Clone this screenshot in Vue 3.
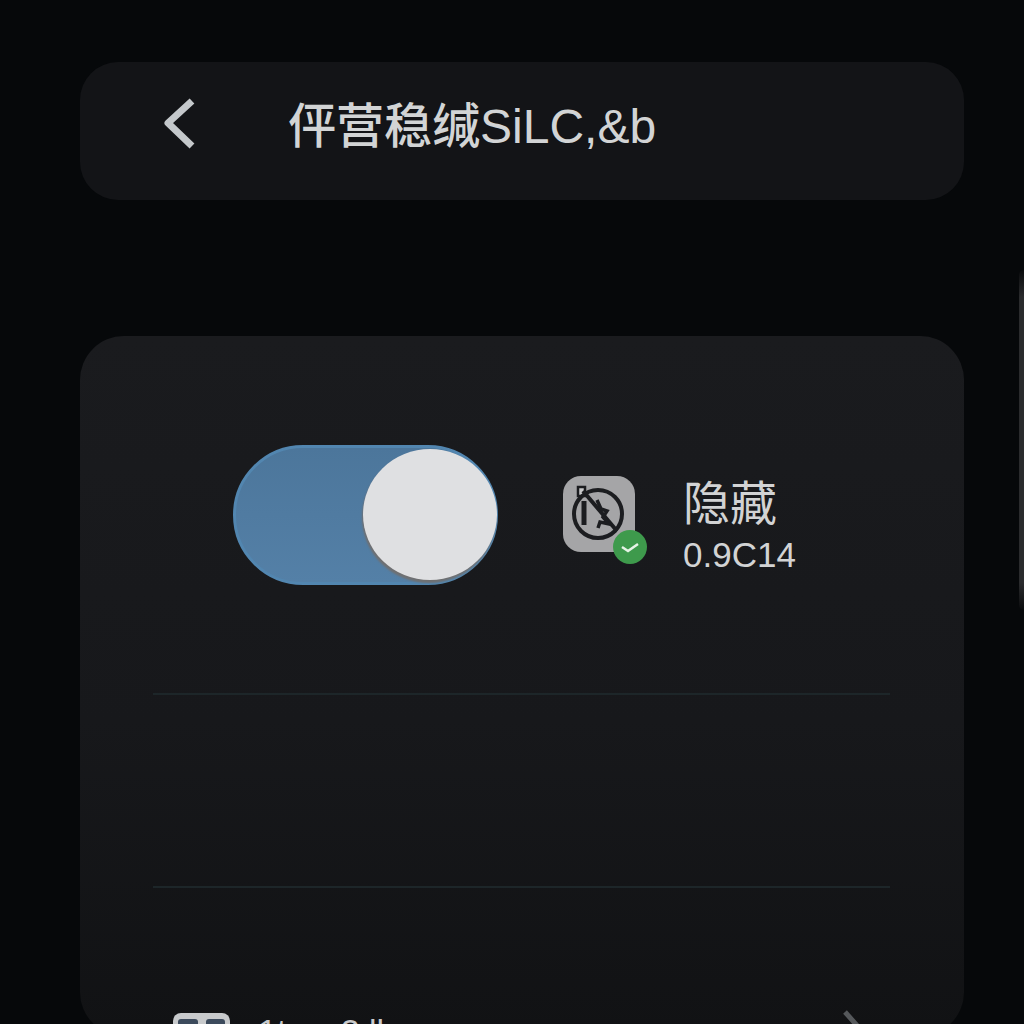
<script setup>
const title = '伻营稳缄SiLC,&b';
</script>

<template>
  <main class="page">
    <header class="top-bar">
      <button class="back-btn" aria-label="Back">
        <svg width="36" height="54" viewBox="0 0 36 54" fill="none">
          <path d="M30 5 L6 27 L30 50" stroke="#c4c8cb" stroke-width="7" stroke-linejoin="round" />
        </svg>
      </button>
      <h1 class="top-title">{{ title }}</h1>
    </header>

    <section class="card">
      <div class="section first">
        <div class="toggle">
          <div class="knob"></div>
        </div>
        <div class="app-icon">
          <svg width="72" height="76" viewBox="0 0 72 76" fill="none">
            <rect x="15" y="11" width="7" height="9" fill="#c9c9ca" stroke="#1c1d20" stroke-width="2.5" />
            <circle cx="35" cy="38" r="24" stroke="#1c1d20" stroke-width="4" />
            <path d="M20 15 L54 55" stroke="#1c1d20" stroke-width="4" />
            <path d="M21 25 V49" stroke="#1c1d20" stroke-width="5" />
            <path d="M34 24 L38 33 L44 35 L40 41 L46 48 L37 46 L35 52" stroke="#1c1d20" stroke-width="3.5" />
          </svg>
          <span class="badge">
            <svg width="22" height="16" viewBox="0 0 22 16" fill="none">
              <path d="M3 8 L9 12 L19 5" stroke="#e6f3e6" stroke-width="2.5" />
            </svg>
          </span>
        </div>
        <div class="info">
          <span class="info-name">隐藏</span>
          <span class="info-version">0.9C14</span>
        </div>
      </div>

      <div class="section middle"></div>

      <div class="section last">
        <div class="row-icon">
          <span class="row-pane"></span>
          <span class="row-pane"></span>
        </div>
        <span class="row-text">1to 2.ll</span>
        <svg class="row-arrow" width="22" height="40" viewBox="0 0 22 40" fill="none">
          <path d="M3 2 L19 20 L3 38" stroke="#55585b" stroke-width="5" />
        </svg>
      </div>
    </section>

    <div class="side-edge"></div>
  </main>
</template>

<style scoped>
.page {
  position: relative;
  box-sizing: border-box;
  height: 1024px;
  overflow: hidden;
  padding: 62px 60px 0 80px;
  background-color: #06080a;
  font-family: "Noto Sans CJK SC", "Liberation Sans", sans-serif;
}

.top-bar {
  display: flex;
  align-items: center;
  height: 138px;
  padding-left: 82px;
  border-radius: 38px;
  background-color: #131417;
}

.back-btn {
  display: flex;
  width: 126px;
  padding: 0;
  margin-bottom: 16px;
  border: none;
  background: none;
}

.top-title {
  margin: 0 0 9px;
  font-family: "Liberation Sans", "Noto Sans CJK SC", sans-serif;
  font-size: 48px;
  font-weight: 500;
  line-height: 56px;
  color: #d2d4d5;
}

.card {
  height: 700px;
  margin-top: 136px;
  padding: 0 74px 0 73px;
  border-radius: 44px;
  background: linear-gradient(180deg, #1a1b1e 0%, #17181b 55%, #111214 100%);
}

.section {
  display: flex;
  align-items: flex-start;
  border-bottom: 2px solid #1d2629;
}

.first {
  height: 248px;
  padding: 109px 0 0 80px;
}

.middle {
  height: 191px;
}

.last {
  padding: 123px 0 0 20px;
  border-bottom: none;
}

.toggle {
  display: flex;
  align-items: center;
  justify-content: flex-end;
  box-sizing: border-box;
  width: 265px;
  height: 140px;
  border: 3px solid #5286b0;
  border-radius: 70px;
  background: linear-gradient(180deg, #4c769b 0%, #5480a7 100%);
}

.knob {
  width: 134px;
  height: 131px;
  margin: -2px -2px 0 0;
  border-radius: 50%;
  background-color: #dfe0e2;
  box-shadow: -1px 3px 2px #6f7072;
}

.app-icon {
  position: relative;
  width: 72px;
  height: 76px;
  margin: 31px 0 0 65px;
  border-radius: 18px;
  background-color: #a5a5a7;
}

.badge {
  position: absolute;
  right: -12px;
  bottom: -12px;
  display: flex;
  align-items: center;
  justify-content: center;
  width: 34px;
  height: 34px;
  border-radius: 50%;
  background-color: #3e9a4c;
}

.info {
  display: flex;
  flex-direction: column;
  margin: 25px 0 0 48px;
  color: #d2d3d4;
}

.info-name {
  font-size: 47px;
  line-height: 60px;
}

.info-version {
  margin-top: 5px;
  font-family: "Liberation Sans", sans-serif;
  font-size: 35px;
  line-height: 40px;
}

.row-icon {
  display: flex;
  gap: 8px;
  box-sizing: border-box;
  width: 57px;
  height: 40px;
  margin-top: 2px;
  padding: 6px 5px;
  border-radius: 8px;
  background-color: #c8cacc;
}

.row-pane {
  flex: 1;
  height: 20px;
  border-radius: 3px;
  background-color: #3c4a5c;
}

.row-text {
  margin-left: 28px;
  font-family: "Liberation Sans", sans-serif;
  font-size: 34px;
  line-height: 40px;
  word-spacing: 26px;
  color: #c9cacb;
}

.row-arrow {
  margin: -1px 26px 0 auto;
}

.side-edge {
  position: absolute;
  top: 270px;
  right: 0;
  width: 5px;
  height: 340px;
  border-radius: 6px 0 0 6px;
  background: linear-gradient(180deg, #0a0b0d 0%, #2a2b2d 8%, #2a2b2d 92%, #0a0b0d 100%);
}
</style>
